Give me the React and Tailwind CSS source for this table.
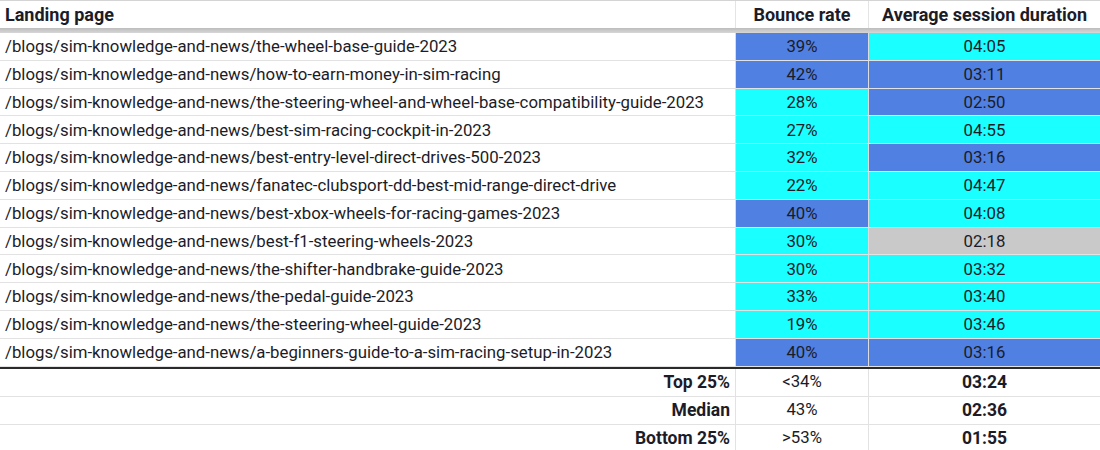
import React from "react";

const BLUE = "bg-[#5080e2]";
const CYAN = "bg-[#1affff]";
const GRAY = "bg-[#c9c9c9]";

const rows = [
  ["the-wheel-base-guide-2023", "39%", BLUE, "04:05", CYAN],
  ["how-to-earn-money-in-sim-racing", "42%", BLUE, "03:11", BLUE],
  ["the-steering-wheel-and-wheel-base-compatibility-guide-2023", "28%", CYAN, "02:50", BLUE],
  ["best-sim-racing-cockpit-in-2023", "27%", CYAN, "04:55", CYAN],
  ["best-entry-level-direct-drives-500-2023", "32%", CYAN, "03:16", BLUE],
  ["fanatec-clubsport-dd-best-mid-range-direct-drive", "22%", CYAN, "04:47", CYAN],
  ["best-xbox-wheels-for-racing-games-2023", "40%", BLUE, "04:08", CYAN],
  ["best-f1-steering-wheels-2023", "30%", CYAN, "02:18", GRAY],
  ["the-shifter-handbrake-guide-2023", "30%", CYAN, "03:32", CYAN],
  ["the-pedal-guide-2023", "33%", CYAN, "03:40", CYAN],
  ["the-steering-wheel-guide-2023", "19%", CYAN, "03:46", CYAN],
  ["a-beginners-guide-to-a-sim-racing-setup-in-2023", "40%", BLUE, "03:16", BLUE],
];

const summary = [
  ["Top 25%", "<34%", "03:24"],
  ["Median", "43%", "02:36"],
  ["Bottom 25%", ">53%", "01:55"],
];

const cols = "grid grid-cols-[735px_133px_1fr]";

export default function App() {
  return (
    <div className="w-[1100px] h-[450px] bg-white overflow-hidden text-[16.8px] text-[#1c1c28] font-['Roboto','Liberation_Sans',sans-serif]">
      <div className="border-t border-[#d4d4d4]" />
      {/* header */}
      <div className={`${cols} h-[27px] font-bold text-[18px] items-center`}>
        <div className="px-[5px]">Landing page</div>
        <div className="h-full flex items-center justify-center border-l border-[#e4e4e4]">Bounce rate</div>
        <div className="h-full flex items-center justify-center border-l border-[#e4e4e4]">Average session duration</div>
      </div>
      <div className="h-[5px] bg-gradient-to-b from-[#bdbdbd] to-[#d6d6d6]" />

      {/* data */}
      {rows.map(([slug, bounce, bc, dur, dc], i) => (
        <div key={i} className={`${cols} h-[27.8px] border-b border-[#e2e2e2] last:border-b-0`}>
          <div className="px-[5px] pt-px flex items-center whitespace-nowrap">/blogs/sim-knowledge-and-news/{slug}</div>
          <div className={`${bc} pt-px flex items-center justify-center border-l border-[#dcdcdc]`}>{bounce}</div>
          <div className={`${dc} pt-px flex items-center justify-center border-l border-[#dcdcdc]`}>{dur}</div>
        </div>
      ))}
      <div className="h-[2px] bg-[#2a2a2a]" />

      {/* summary */}
      {summary.map(([label, bounce, dur], i) => (
        <div key={i} className={`${cols} h-[28px] border-b border-[#e2e2e2]`}>
          <div className="px-[5px] flex items-center justify-end font-bold text-[17.5px]">{label}</div>
          <div className="flex items-center justify-center border-l border-[#e2e2e2]">{bounce}</div>
          <div className="flex items-center justify-center border-l border-[#e2e2e2] font-bold text-[17.5px]">{dur}</div>
        </div>
      ))}
    </div>
  );
}
